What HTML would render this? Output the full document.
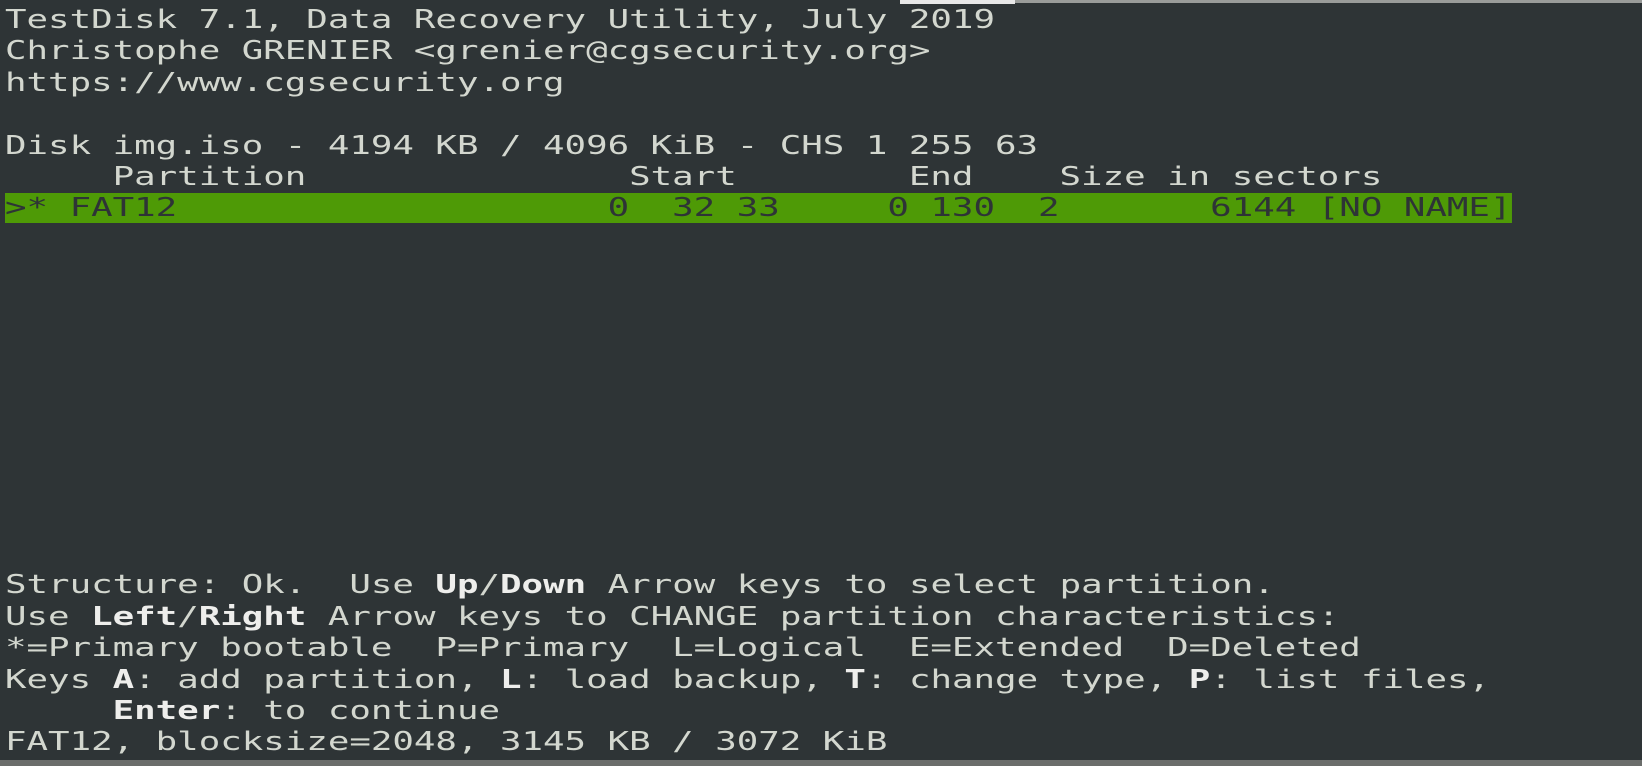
<!DOCTYPE html>
<html><head><meta charset="utf-8"><style>
html,body{margin:0;padding:0;width:1642px;height:766px;overflow:hidden;background:#5a5c5a;}
#term{position:absolute;left:0;top:0;width:1642px;height:760px;background:#2e3436;overflow:hidden;}
#top{position:absolute;left:900px;top:0;width:115px;height:4px;background:#e8e8e8;}
#top2{position:absolute;left:1015px;top:0;width:627px;height:3px;background:#9a9c9a;}
pre{position:absolute;left:5px;top:5px;margin:0;font-family:"DejaVu Sans Mono","Liberation Mono",monospace;font-size:26.2px;line-height:31.4px;color:#d3d7cf;transform:scaleX(1.365);transform-origin:0 0;white-space:pre;}
b{color:#eeeeec;font-weight:bold;}
.sel{background:#4e9a06;color:#2e3436;}
#bot{position:absolute;left:0;top:760px;width:1642px;height:6px;background:#6b6d6b;}
</style></head><body>
<div id="term">
<pre>TestDisk 7.1, Data Recovery Utility, July 2019
Christophe GRENIER &lt;grenier@cgsecurity.org&gt;
https://www.cgsecurity.org

Disk img.iso - 4194 KB / 4096 KiB - CHS 1 255 63
     Partition               Start        End    Size in sectors
<span class="sel">&gt;* FAT12                    0  32 33     0 130  2       6144 [NO NAME]</span>











Structure: Ok.  Use <b>Up</b>/<b>Down</b> Arrow keys to select partition.
Use <b>Left</b>/<b>Right</b> Arrow keys to CHANGE partition characteristics:
*=Primary bootable  P=Primary  L=Logical  E=Extended  D=Deleted
Keys <b>A</b>: add partition, <b>L</b>: load backup, <b>T</b>: change type, <b>P</b>: list files,
     <b>Enter</b>: to continue
FAT12, blocksize=2048, 3145 KB / 3072 KiB</pre>
</div>
<div id="top"></div><div id="top2"></div>
<div id="bot"></div>
</body></html>
